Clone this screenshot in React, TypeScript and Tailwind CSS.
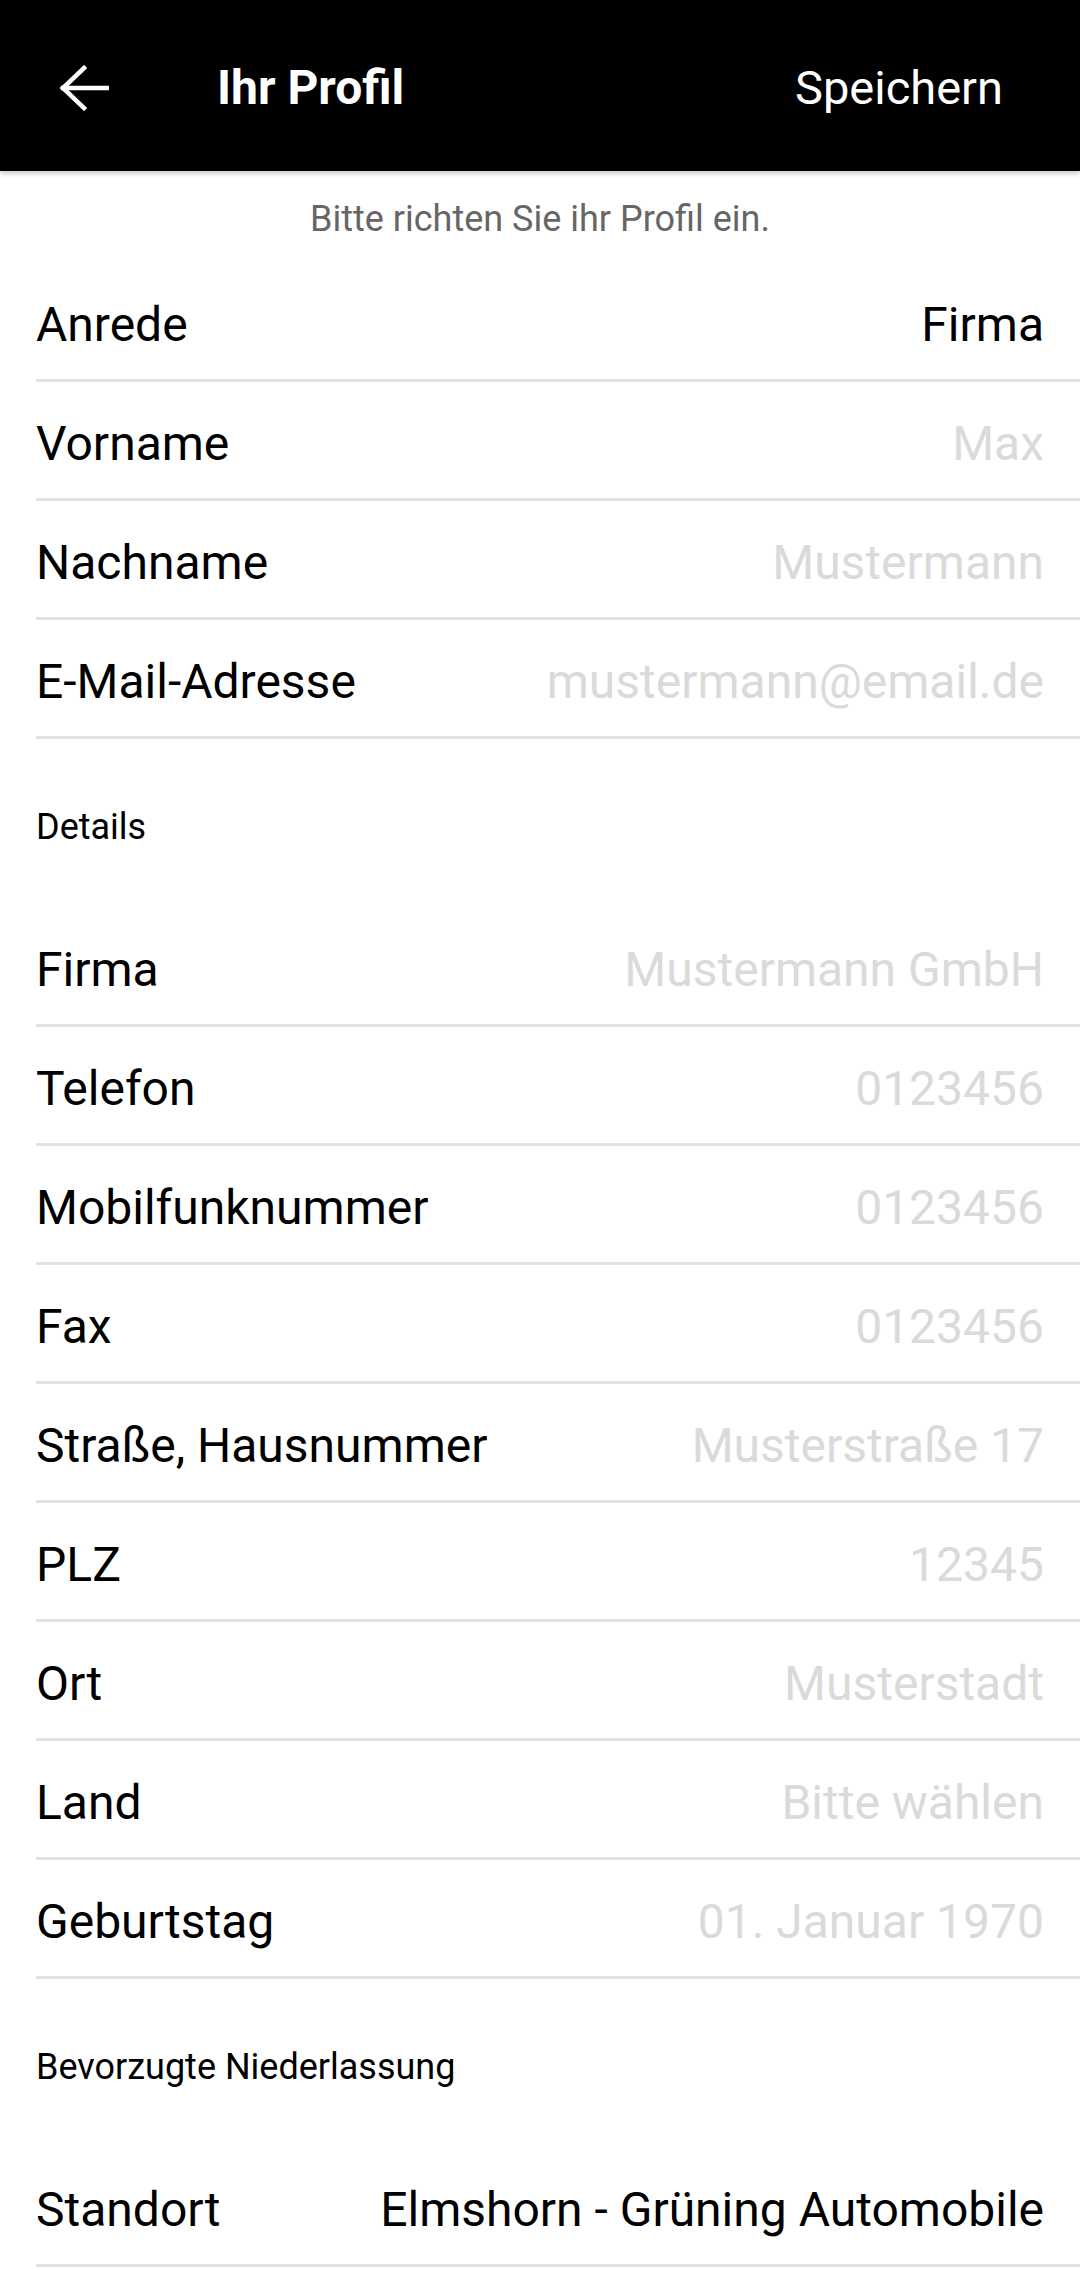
import React from 'react';

type Field = { label: string; value: string; filled?: boolean };

const personal: Field[] = [
    { label: 'Anrede', value: 'Firma', filled: true },
    { label: 'Vorname', value: 'Max' },
    { label: 'Nachname', value: 'Mustermann' },
    { label: 'E-Mail-Adresse', value: 'mustermann@email.de' },
];

const details: Field[] = [
    { label: 'Firma', value: 'Mustermann GmbH' },
    { label: 'Telefon', value: '0123456' },
    { label: 'Mobilfunknummer', value: '0123456' },
    { label: 'Fax', value: '0123456' },
    { label: 'Straße, Hausnummer', value: 'Musterstraße 17' },
    { label: 'PLZ', value: '12345' },
    { label: 'Ort', value: 'Musterstadt' },
    { label: 'Land', value: 'Bitte wählen' },
    { label: 'Geburtstag', value: '01. Januar 1970' },
];

const Row = ({ label, value, filled }: Field) => (
    <div className="ml-[36px] pr-[36px] h-[119px] pt-[8px] flex items-center justify-between border-b-[3px] border-[#e2e2e2] text-[48px] leading-none">
        <span className="text-black whitespace-nowrap">{label}</span>
        <span className={`whitespace-nowrap ${filled ? 'text-black' : 'text-[#dadada]'}`}>{value}</span>
    </div>
);

const SectionTitle = ({ children }: { children: React.ReactNode }) => (
    <div className="h-[169px] pt-[7px] pl-[36px] flex items-center text-[36px] leading-none text-black">
        {children}
    </div>
);

export default function App() {
    return (
        <div className="w-[1080px] min-h-[2270px] bg-white font-['Roboto','Liberation_Sans',sans-serif] overflow-hidden">
            {/* Kopfzeile */}
            <div className="relative z-10 h-[171px] bg-black flex items-center pl-[59px] pr-[77px] pt-[4px] shadow-[0_2px_6px_rgba(0,0,0,0.25)]">
                <svg width="50" height="46" viewBox="0 0 50 46" fill="none" stroke="white" strokeWidth="4.5" strokeLinecap="square">
                    <path d="M4 23 H48" />
                    <path d="M25 3 L4 23 L25 43" strokeLinejoin="miter" />
                </svg>
                <h1 className="ml-[108px] text-[48px] font-bold text-white leading-none">Ihr Profil</h1>
                <button className="ml-auto text-[47px] text-white leading-none">Speichern</button>
            </div>

            <div className="h-[92px] flex items-center justify-center text-[36px] text-[#666666] leading-none pt-[4px]">
                Bitte richten Sie ihr Profil ein.
            </div>

            {personal.map((f) => (
                <Row key={f.label} {...f} />
            ))}

            <SectionTitle>Details</SectionTitle>

            {details.map((f) => (
                <Row key={f.label} {...f} />
            ))}

            <SectionTitle>Bevorzugte Niederlassung</SectionTitle>

            <Row label="Standort" value="Elmshorn - Grüning Automobile" filled />
        </div>
    );
}
